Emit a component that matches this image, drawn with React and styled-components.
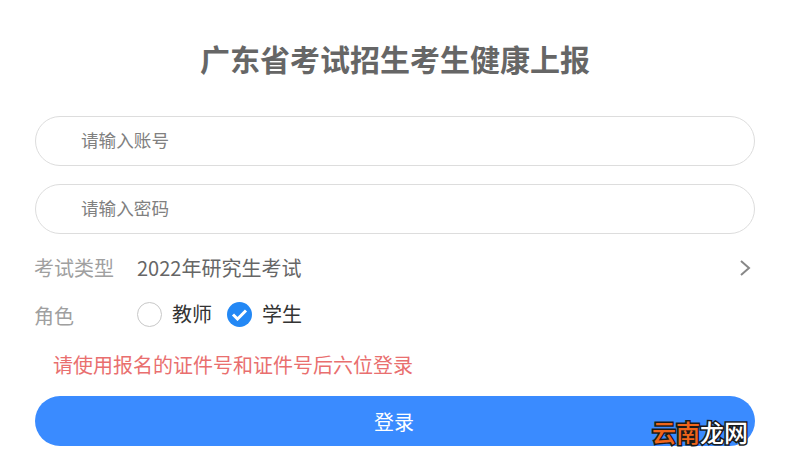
import React from 'react'
import styled, { createGlobalStyle } from 'styled-components'

const GlobalStyle = createGlobalStyle`
html, body {
  margin: 0;
  padding: 0;
  background: #fff;
  font-family: "Noto Sans CJK SC", "Liberation Sans", sans-serif;
}
`

const Page = styled.div`
  position: relative;
  width: 785px;
  height: 463px;
  overflow: hidden;
  padding: 0 30px 0 35px;
  box-sizing: border-box;
`

const Title = styled.h1`
  margin: 0;
  padding-top: 38px;
  height: 116px;
  box-sizing: border-box;
  font-size: 30px;
  line-height: 40px;
  font-weight: 700;
  color: #666;
  text-align: center;
`

const Input = styled.input`
  display: block;
  width: 100%;
  height: 50px;
  margin-bottom: 18px;
  padding: 0 20px 3px 45px;
  box-sizing: border-box;
  border: 1px solid #ddd;
  border-radius: 25px;
  outline: none;
  background: #fff;
  font: inherit;
  font-size: 17.6px;
  color: #333;

  &::placeholder {
    color: #808080;
    opacity: 1;
  }
`

const Row = styled.div`
  display: flex;
  align-items: center;
  height: ${props => props.$height}px;
  margin-top: ${props => props.$top || 0}px;
`

const Label = styled.span`
  width: 102px;
  margin-left: -1px;
  margin-right: 1px;
  padding-top: ${props => props.$drop || 0}px;
  font-size: 20px;
  color: #a0a0a0;
  flex-shrink: 0;
`

const Value = styled.span`
  flex: 1;
  font-size: 20px;
  color: #666;
`

const Chevron = styled.svg`
  margin-right: 3px;
  margin-top: 2px;
`

const Radio = styled.span`
  display: flex;
  align-items: center;
  justify-content: center;
  width: 25px;
  height: 25px;
  box-sizing: border-box;
  border-radius: 50%;
  border: ${props => (props.$checked ? 'none' : '1px solid #c8c8c8')};
  background: ${props => (props.$checked ? '#2388f5' : '#fff')};
  margin-right: 10px;
`

const RadioText = styled.span`
  font-size: 20px;
  color: #333;
  margin-right: 15px;
  padding-bottom: 2px;
`

const Notice = styled.p`
  margin: 11px 0 9px;
  padding-left: 18px;
  height: 44px;
  font-size: 20px;
  line-height: 44px;
  color: #e96f6f;
`

const SubmitButton = styled.button`
  display: block;
  width: 100%;
  height: 50px;
  padding: 0 2px 0 0;
  border: none;
  border-radius: 25px;
  background: #3a8bff;
  color: #fff;
  font: inherit;
  font-size: 20px;
`

const Watermark = styled.div`
  position: absolute;
  left: 652px;
  top: 414px;
  font-size: 24px;
  line-height: 36px;
  font-weight: 500;
  paint-order: stroke fill;
  -webkit-text-stroke: 3px #1a1a1a;
  color: #fff;
`

const WatermarkAccent = styled.span`
  color: #f0651a;
`

export default function App() {
  return (
    <Page>
      <GlobalStyle />
      <Title>广东省考试招生考生健康上报</Title>
      <Input placeholder="请输入账号" />
      <Input placeholder="请输入密码" />
      <Row $height={30}>
        <Label>考试类型</Label>
        <Value>2022年研究生考试</Value>
        <Chevron width="14" height="18" viewBox="0 0 14 18" fill="none">
          <path d="M3 2l8 7-8 7" stroke="#888" strokeWidth="2" />
        </Chevron>
      </Row>
      <Row $height={36} $top={14}>
        <Label $drop={3}>角色</Label>
        <Radio />
        <RadioText>教师</RadioText>
        <Radio $checked>
          <svg width="17" height="13" viewBox="0 0 17 13" fill="none">
            <path d="M2 6.5l4.5 4.5L15 2.5" stroke="#fff" strokeWidth="3" />
          </svg>
        </Radio>
        <RadioText>学生</RadioText>
      </Row>
      <Notice>请使用报名的证件号和证件号后六位登录</Notice>
      <SubmitButton>登录</SubmitButton>
      <Watermark>
        <WatermarkAccent>云南</WatermarkAccent>龙网
      </Watermark>
    </Page>
  )
}
